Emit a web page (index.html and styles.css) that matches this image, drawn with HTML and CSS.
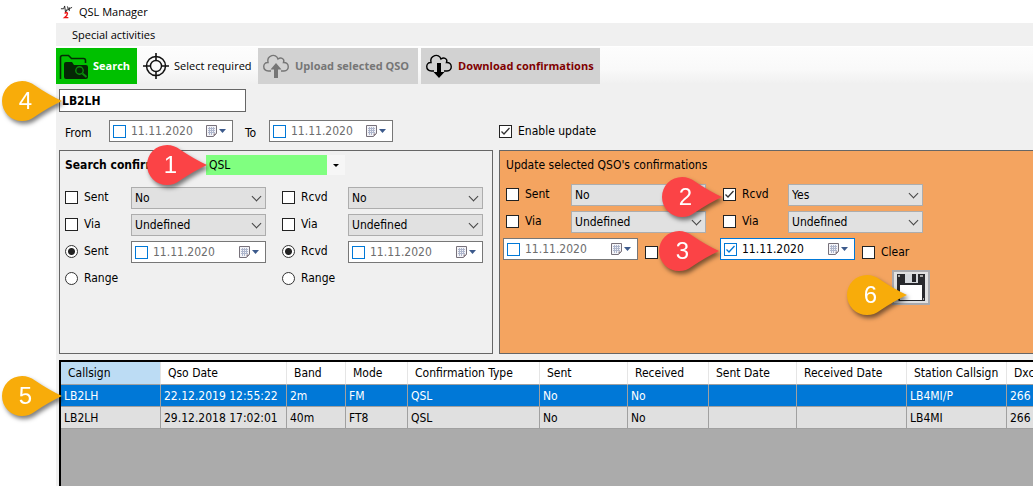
FILE: index.html
```html
<!DOCTYPE html>
<html lang="en">
<head>
<meta charset="utf-8">
<title>QSL Manager</title>
<link rel="stylesheet" href="styles.css">
</head>
<body>
<svg class="defs" aria-hidden="true">
  <defs>
    <symbol id="drop" viewBox="0 0 62 42"><path d="M21 1a20 20 0 1 0 0 40c5 0 9-1.500 13-4.500Q48 27 61 21Q48 15 34 5.500C30 2.500 26 1 21 1Z"/></symbol>
    <symbol id="cal" viewBox="0 0 22 14">
      <path d="M1.500 1.500h10v8l-3 3h-7z" fill="#f4f4f8" stroke="#77717a"/>
      <path d="M3 4.500h7M3 6.500h7M3 8.500h7M4.500 3v8M6.500 3v8M8.500 3v6" stroke="#aeb6cc" fill="none"/>
      <path d="M8.500 12.500v-3h3z" fill="#8b8088"/>
      <path d="M14 5h7l-3.500 4z" fill="#3c5a8c"/>
    </symbol>
    <symbol id="cloud" viewBox="0 0 28 26"><path d="M9 18H6.500C0 18 .5 9 6 9.500C4.500 2.500 14-.5 16 6c3-2.500 7 0 5.500 3.500C27.500 9 28 18 22 18h-3" fill="none" stroke="currentColor" stroke-width="1.400"/></symbol>
  </defs>
</svg>
<main class="window">
  <header class="titlebar">
    <svg class="app-icon" viewBox="0 0 14 16" aria-hidden="true"><path d="M1 4.500h3l1-3 1 7 2-4M8 2l1 3M8 6l3-2 2-1M10 3v4" stroke="#222" fill="none"/><path d="M5 9.500q2-2 3 0q0 2-3 4.500h4" stroke="#e11" stroke-width="1.500" fill="none"/></svg>
    <h1>QSL Manager</h1>
  </header>
  <nav class="menubar"><button type="button">Special activities</button></nav>
  <div class="toolbar">
    <button class="tool search" type="button">
      <svg width="30" height="28" viewBox="0 0 30 28" aria-hidden="true"><path d="M1.500 27V5.500q0-2 2-2h6l3 3h12q2 0 2 2V11" fill="none" stroke="#042c04" stroke-width="1.600"/><path d="M7 10h6l2 3h12q2 0 2 2v10q0 2-2 2H7q-2 0-2-2V12q0-2 2-2z" fill="#052705"/><circle cx="20.500" cy="18.500" r="3.700" fill="none" stroke="#0a8f0a" stroke-width="1.400"/><path d="M23.500 21.500l4 3.500" stroke="#0a8f0a" stroke-width="2"/></svg>
      <span>Search</span></button>
    <button class="tool select" type="button">
      <svg width="28" height="28" viewBox="0 0 28 28" fill="none" stroke="#111" aria-hidden="true"><circle cx="14" cy="14" r="9.500" stroke-width="1.500"/><circle cx="14" cy="14" r="5.500" stroke-width="1.400"/><path d="M14 1v8M14 19v8M1 14h8M19 14h8" stroke-width="1.600"/></svg>
      <span>Select required</span></button>
    <button class="tool upload" type="button">
      <svg width="28" height="26" viewBox="0 0 28 26" aria-hidden="true"><use href="#cloud"/><path d="M12 25V16.500H8.500L14 10l5.500 6.500H16V25z" fill="currentColor"/></svg>
      <span>Upload selected QSO</span></button>
    <button class="tool download" type="button">
      <svg width="28" height="26" viewBox="0 0 28 26" aria-hidden="true"><use href="#cloud"/><path d="M12 10h4v9h3.500L14 25l-5.500-6H12z" fill="currentColor"/></svg>
      <span>Download confirmations</span></button>
  </div>

  <div class="filters">
    <div class="callsign anchor"><input type="text" value="LB2LH" aria-label="Callsign">
      <span class="callout amber"><svg><use href="#drop"/></svg><b>4</b></span></div>
    <div class="range">
      <span class="from">From</span>
      <div class="date narrow"><input type="checkbox" aria-label="Use from date"><input type="text" value="11.11.2020" aria-label="From date"><button type="button" aria-label="Open calendar"><svg><use href="#cal"/></svg></button></div>
      <span class="to">To</span>
      <div class="date narrow"><input type="checkbox" aria-label="Use to date"><input type="text" value="11.11.2020" aria-label="To date"><button type="button" aria-label="Open calendar"><svg><use href="#cal"/></svg></button></div>
      <label class="enable"><input type="checkbox" checked>Enable update</label>
    </div>
  </div>

  <div class="panels">
    <section class="panel find">
      <div class="panel-head">
        <h2>Search confirmation</h2>
        <div class="combo anchor"><select aria-label="Confirmation type"><option>QSL</option></select>
          <span class="callout red"><svg><use href="#drop"/></svg><b>1</b></span></div>
      </div>
      <div class="groups">
        <div class="group">
          <div class="row"><label><input type="checkbox">Sent</label><div class="drop"><select aria-label="Sent status"><option>No</option></select></div></div>
          <div class="row"><label><input type="checkbox">Via</label><div class="drop"><select aria-label="Sent via"><option>Undefined</option></select></div></div>
          <div class="row"><label><input type="radio" name="sent" checked>Sent</label><div class="date"><input type="checkbox" aria-label="Use sent date"><input type="text" value="11.11.2020" aria-label="Sent date"><button type="button" aria-label="Open calendar"><svg><use href="#cal"/></svg></button></div></div>
          <div class="row"><label><input type="radio" name="sent">Range</label></div>
        </div>
        <div class="group">
          <div class="row"><label><input type="checkbox">Rcvd</label><div class="drop"><select aria-label="Received status"><option>No</option></select></div></div>
          <div class="row"><label><input type="checkbox">Via</label><div class="drop"><select aria-label="Received via"><option>Undefined</option></select></div></div>
          <div class="row"><label><input type="radio" name="rcvd" checked>Rcvd</label><div class="date"><input type="checkbox" aria-label="Use received date"><input type="text" value="11.11.2020" aria-label="Received date"><button type="button" aria-label="Open calendar"><svg><use href="#cal"/></svg></button></div></div>
          <div class="row"><label><input type="radio" name="rcvd">Range</label></div>
        </div>
      </div>
    </section>

    <section class="panel update">
      <h2>Update selected QSO's confirmations</h2>
      <div class="groups">
        <div class="group">
          <div class="row"><label><input type="checkbox">Sent</label><div class="drop"><select aria-label="New sent status"><option>No</option></select></div></div>
          <div class="row"><label><input type="checkbox">Via</label><div class="drop"><select aria-label="New sent via"><option>Undefined</option></select></div></div>
          <div class="row dates"><div class="date"><input type="checkbox" aria-label="Set sent date"><input type="text" value="11.11.2020" aria-label="New sent date"><button type="button" aria-label="Open calendar"><svg><use href="#cal"/></svg></button></div><label class="clear"><input type="checkbox">Clear</label></div>
        </div>
        <div class="group">
          <div class="row anchor"><label><input type="checkbox" checked>Rcvd</label><div class="drop"><select aria-label="New received status"><option>Yes</option></select></div>
            <span class="callout red"><svg><use href="#drop"/></svg><b>2</b></span></div>
          <div class="row"><label><input type="checkbox">Via</label><div class="drop"><select aria-label="New received via"><option>Undefined</option></select></div></div>
          <div class="row dates anchor"><div class="date active"><input type="checkbox" checked aria-label="Set received date"><input type="text" value="11.11.2020" aria-label="New received date"><button type="button" aria-label="Open calendar"><svg><use href="#cal"/></svg></button></div><label class="clear"><input type="checkbox">Clear</label>
            <span class="callout red"><svg><use href="#drop"/></svg><b>3</b></span></div>
          <div class="save-wrap anchor">
            <button class="save" type="button" aria-label="Save">
              <svg width="30" height="29" viewBox="0 0 30 29" aria-hidden="true"><path d="M1 1h28v27H3l-2-2z" fill="#28292d"/><path d="M9 1h13v9H9z" fill="#d5d8dc"/><path d="M16 1h4v8h-4z" fill="#222327"/><path d="M4 12h22v15H4z" fill="#fff"/><path d="M24 2h3v2h-3zM2 2h2v2H2zM27 25h1v2h-1z" fill="#aaa"/></svg>
            </button>
            <span class="callout amber"><svg><use href="#drop"/></svg><b>6</b></span>
          </div>
        </div>
      </div>
    </section>
  </div>

  <div class="results anchor">
    <div class="scroller">
      <table>
        <colgroup><col class="w100"><col class="w126"><col class="w59"><col class="w62"><col class="w132"><col class="w88"><col class="w81"><col class="w88"><col class="w110"><col class="w100"><col class="w81"></colgroup>
        <thead><tr><th class="sorted">Callsign</th><th>Qso Date</th><th>Band</th><th>Mode</th><th>Confirmation Type</th><th>Sent</th><th>Received</th><th>Sent Date</th><th>Received Date</th><th>Station Callsign</th><th>Dxcc</th></tr></thead>
        <tbody>
          <tr class="selected"><td>LB2LH</td><td>22.12.2019 12:55:22</td><td>2m</td><td>FM</td><td>QSL</td><td>No</td><td>No</td><td></td><td></td><td>LB4MI/P</td><td>266</td></tr>
          <tr><td>LB2LH</td><td>29.12.2018 17:02:01</td><td>40m</td><td>FT8</td><td>QSL</td><td>No</td><td>No</td><td></td><td></td><td>LB4MI</td><td>266</td></tr>
        </tbody>
      </table>
    </div>
    <span class="callout amber"><svg><use href="#drop"/></svg><b>5</b></span>
  </div>
</main>
</body>
</html>
```

FILE: styles.css
```css
* { box-sizing: border-box; }
body { margin: 0; background: #fff; color: #000; font: 12px/16px "DejaVu Sans Condensed", "Noto Sans", sans-serif; overflow: hidden; }
button, input, select { font: inherit; color: inherit; margin: 0; }
h1, h2 { margin: 0; font: inherit; }
.defs { position: absolute; width: 0; height: 0; }
.window { margin-left: 56px; min-height: 100vh; display: flex; flex-direction: column; background: #f0f0f0; }

.titlebar, .menubar, .toolbar { font-family: "Open Sans", sans-serif; font-size: 11px; }
.titlebar { display: flex; align-items: center; gap: 6px; height: 23px; padding-left: 4px; background: #fff; }
.app-icon { width: 13px; height: 16px; }
.menubar { height: 24px; display: flex; align-items: center; padding-left: 16px; border-bottom: 1px solid #fff; }
.menubar button { border: 0; padding: 0; background: none; }
.toolbar { display: flex; height: 37px; padding-top: 1px; background: linear-gradient(#fdfdfd, #f9f9f9 60%, #f0f0f0); }
.tool { display: flex; align-items: center; border: 0; padding: 0 5px 0 3px; gap: 4px; background: none; white-space: nowrap; }
.tool svg { flex: none; }
.tool span { flex: 1; text-align: left; }
.search { width: 81px; background: #00c000; color: #fff; font-weight: 700; }
.select { width: 119px; margin-left: 2px; }
.upload { width: 160px; margin-right: 3px; gap: 5px; padding-left: 4px; background: #d2d2d2; color: #767676; font-weight: 700; }
.download { width: 179px; gap: 5px; padding-left: 4px; background: #d2d2d2; color: #000; font-weight: 700; }
.download span { color: #800000; }

.anchor { position: relative; }
.callout { position: absolute; right: 100%; top: 50%; width: 62px; height: 42px; margin-top: -21px; z-index: 2; filter: drop-shadow(2px 3px 2px rgba(0, 0, 0, .5)); pointer-events: none; }
.callout svg { display: block; width: 62px; height: 42px; }
.callout b { position: absolute; inset: 0 13px 0 0; text-align: center; font: 24px/42px "Liberation Sans", Arial, sans-serif; color: #fff; }
.amber { fill: #f8ac0a; }
.red { fill: #fb4346; }

.filters { padding: 5px 3px 8px; }
.callsign { width: 187px; }
.callsign input { display: block; width: 100%; height: 23px; border: 1px solid #666; background: #fff; padding: 0 2px; font-weight: 700; }
.callsign .callout { margin-right: -4px; }
.range { display: flex; align-items: center; padding: 8px 0 0 6px; }
.from { width: 44px; padding-top: 4px; }
.to { width: 36px; padding: 4px 0 0 12px; }
label { display: flex; align-items: center; gap: 6px; }
.enable { margin-left: 106px; }

input[type="checkbox"], input[type="radio"] { appearance: none; flex: none; width: 13px; height: 13px; border: 1px solid #222; background: #fff; }
input[type="checkbox"]:checked { background: #fff url("data:image/svg+xml,%3Csvg xmlns='http://www.w3.org/2000/svg' viewBox='0 0 11 11'%3E%3Cpath d='M1.500 5.500L4 8l5.500-6' fill='none' stroke='%23333' stroke-width='1.300'/%3E%3C/svg%3E"); }
input[type="radio"] { border-radius: 50%; border-color: #333; }
input[type="radio"]:checked { background: radial-gradient(circle, #222 3px, #fff 4px); }

.date { display: flex; align-items: center; width: 135px; height: 22px; padding: 0 5px 0 3px; border: 1px solid #777; background: #fff; color: #6d6d6d; }
.date.narrow { width: 124px; }
.date input[type="checkbox"] { border-color: #0078d7; }
.date input[type="text"] { flex: 1; min-width: 0; border: 0; padding: 0 0 0 5px; background: none; }
.date button { border: 0; padding: 0; background: none; width: 22px; height: 14px; }
.date svg { display: block; width: 22px; height: 14px; }
.date.active { border-color: #0078d7; color: #000; }
.date.active input[type="checkbox"] { background-image: url("data:image/svg+xml,%3Csvg xmlns='http://www.w3.org/2000/svg' viewBox='0 0 11 11'%3E%3Cpath d='M1.500 5.500L4 8l5.500-6' fill='none' stroke='%230078d7' stroke-width='1.300'/%3E%3C/svg%3E"); }

.panels { display: flex; gap: 6px; padding-left: 3px; }
.panel { border: 1px solid #666; height: 204px; }
.find { flex: none; width: 434px; padding: 4px 5px; }
.update { flex: 1; border-right: 0; background: #f4a460; padding: 6px 3px; white-space: nowrap; }
.panel-head { display: flex; align-items: center; height: 20px; margin-bottom: 12px; }
.find h2 { width: 141px; font-weight: 700; white-space: nowrap; }
.update h2 { padding: 0 3px; margin-bottom: 11px; }
.combo { width: 139px; height: 20px; }
.combo select { appearance: none; display: block; width: 100%; height: 20px; padding: 0 3px; border: 0; background: linear-gradient(90deg, #80ff80 121px, #f6f6f6 121px); }
.combo::after { content: ""; position: absolute; right: 6px; top: 9px; border: 3px solid transparent; border-top-color: #000; border-bottom: 0; }
.combo .callout { margin-right: -2px; }
.groups { display: flex; gap: 16px; }
.group { width: 201px; display: grid; gap: 5px; align-content: start; }
.row { display: flex; height: 22px; align-items: center; }
.row > label { width: 66px; flex: none; padding-bottom: 2px; }
.update .row > label { width: 65px; }
.drop { position: relative; width: 135px; }
.drop select { appearance: none; display: block; width: 100%; height: 22px; padding: 0 3px; border: 1px solid #adadad; background: #e1e1e1; }
.drop::after { content: ""; position: absolute; right: 6px; top: 6px; width: 6px; height: 6px; border: solid #444; border-width: 0 1px 1px 0; transform: rotate(45deg); }
.update .groups { padding-left: 3px; }
.update .dates { margin-left: -3px; }
.update .row > .clear { width: auto; margin-left: 7px; padding: 6px 0 0; }
.update .callout { margin-top: -19px; }
.save-wrap { width: 38px; margin: 5px 0 0 169px; }
.save { display: grid; place-items: center; width: 38px; height: 35px; padding: 0; border: 2px solid #a9a9ad; background: #e1e1e1; }
.update .save-wrap .callout { margin-right: -16px; margin-top: -14px; }

.results { flex: 1; display: flex; margin: 6px 0 0 3px; }
.scroller { flex: 1; min-width: 0; overflow: hidden; background: #ababab; border: solid #000; border-width: 2px 0 0 2px; }
.results .callout { top: 36px; margin-right: -4px; }
table { table-layout: fixed; width: 1027px; border-collapse: separate; border-spacing: 0; }
th, td { height: 22px; padding: 0 3px; border: solid #a0a0a0; border-width: 0 1px 1px 0; text-align: left; font-weight: 400; white-space: nowrap; }
th { height: 23px; padding-left: 7px; background: #fff; border-right-color: #e5e5e5; }
th.sorted { background: #bcdcf4; }
td { background: #e0e0e0; }
.selected td { background: #0078d7; color: #fff; }
.w59 { width: 59px; } .w62 { width: 62px; } .w81 { width: 81px; } .w88 { width: 88px; }
.w100 { width: 100px; } .w110 { width: 110px; } .w126 { width: 126px; } .w132 { width: 132px; }
```
